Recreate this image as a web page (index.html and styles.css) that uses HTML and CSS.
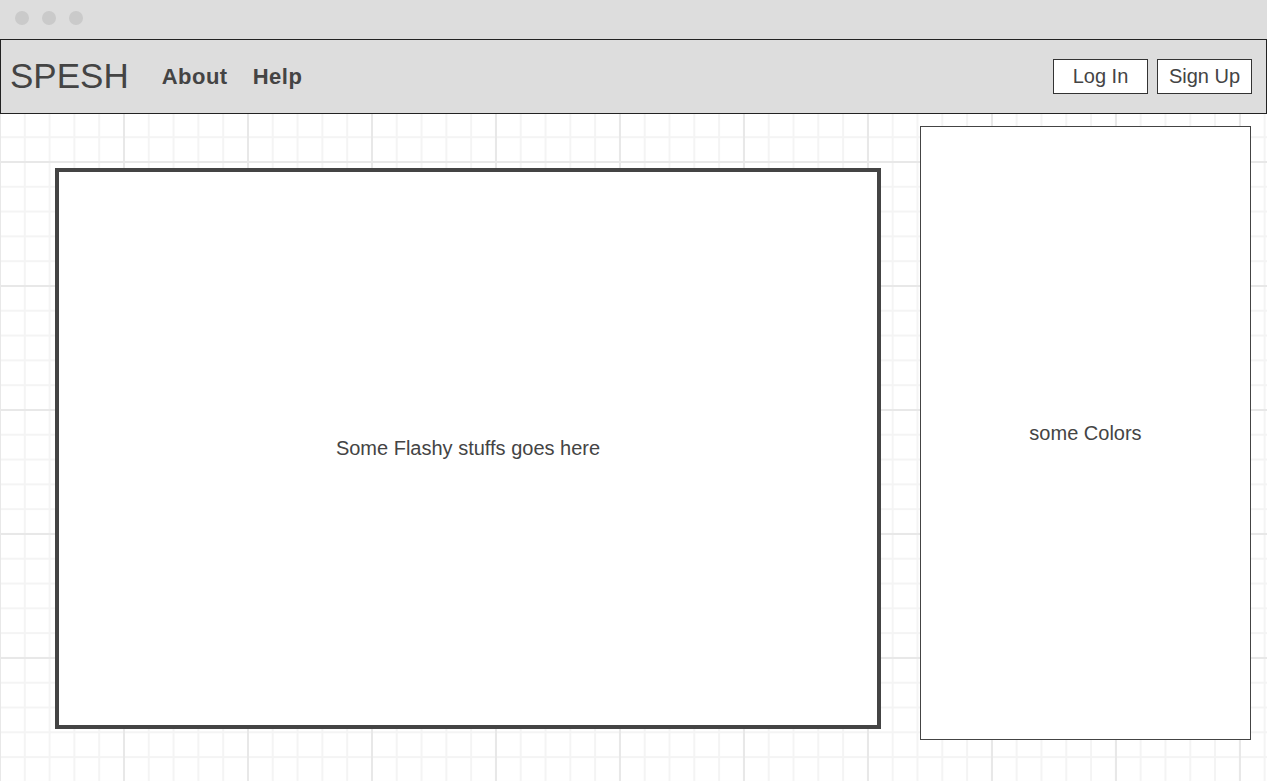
FILE: index.html
```html
<!DOCTYPE html>
<html lang="en">
<head>
<meta charset="utf-8">
<title>SPESH</title>
<link rel="stylesheet" href="styles.css">
</head>
<body>
<div class="titlebar">
  <span class="dot"></span>
  <span class="dot"></span>
  <span class="dot"></span>
</div>
<header class="nav">
  <div class="logo">SPESH</div>
  <nav class="links">
    <a class="link" href="#">About</a>
    <a class="link" href="#">Help</a>
  </nav>
  <div class="auth">
    <button class="btn">Log In</button>
    <button class="btn">Sign Up</button>
  </div>
</header>
<main class="content">
  <section class="stage">Some Flashy stuffs goes here</section>
  <aside class="palette">some Colors</aside>
</main>
</body>
</html>
```

FILE: styles.css
```css
html, body {
  margin: 0;
  padding: 0;
  height: 100%;
}
body {
  font-family: "Liberation Sans", Arial, sans-serif;
  color: #444;
  background-color: #fff;
  background-image:
    linear-gradient(to right, #e8e8e8 2px, transparent 2px),
    linear-gradient(to bottom, #e8e8e8 2px, transparent 2px),
    linear-gradient(to right, #f4f4f4 2px, transparent 2px),
    linear-gradient(to bottom, #f4f4f4 2px, transparent 2px);
  background-size: 124px 124px, 124px 124px, 24.8px 24.8px, 24.8px 24.8px;
  background-position: -1px 37px, -1px 37px, -1px 37px, -1px 37px;
  overflow: hidden;
}
.titlebar {
  height: 39px;
  background: #dddddd;
  display: flex;
  align-items: center;
  gap: 13px;
  padding-left: 15px;
  box-sizing: border-box;
}
.dot {
  width: 14px;
  height: 14px;
  border-radius: 50%;
  background: #cacaca;
  margin-top: -4px;
}
.nav {
  height: 75px;
  box-sizing: border-box;
  border: 1px solid #222;
  background: #dddddd;
  display: flex;
  align-items: center;
  padding: 0 14px 0 9px;
}
.logo {
  font-size: 35px;
  color: #444;
  margin-right: 33px;
  margin-top: -2px;
}
.links {
  display: flex;
  gap: 25px;
}
.link {
  font-size: 22px;
  font-weight: bold;
  letter-spacing: 0.5px;
  color: #444;
  text-decoration: none;
}
.auth {
  margin-left: auto;
  display: flex;
  gap: 9px;
  margin-top: -1px;
}
.btn {
  width: 95px;
  height: 35px;
  box-sizing: border-box;
  border: 1px solid #333;
  background: #fff;
  font-family: "Liberation Sans", Arial, sans-serif;
  font-size: 20px;
  color: #444;
  padding: 0;
  border-radius: 0;
}
.content {
  display: flex;
  align-items: flex-start;
  padding: 12px 16px 0 55px;
  gap: 39px;
}
.stage {
  margin-top: 42px;
  width: 826px;
  height: 561px;
  box-sizing: border-box;
  border: 4px solid #444;
  background: #fff;
  display: flex;
  align-items: center;
  justify-content: center;
  font-size: 20px;
}
.palette {
  width: 331px;
  height: 614px;
  box-sizing: border-box;
  border: 1px solid #444;
  background: #fff;
  display: flex;
  align-items: center;
  justify-content: center;
  font-size: 20px;
}
```
